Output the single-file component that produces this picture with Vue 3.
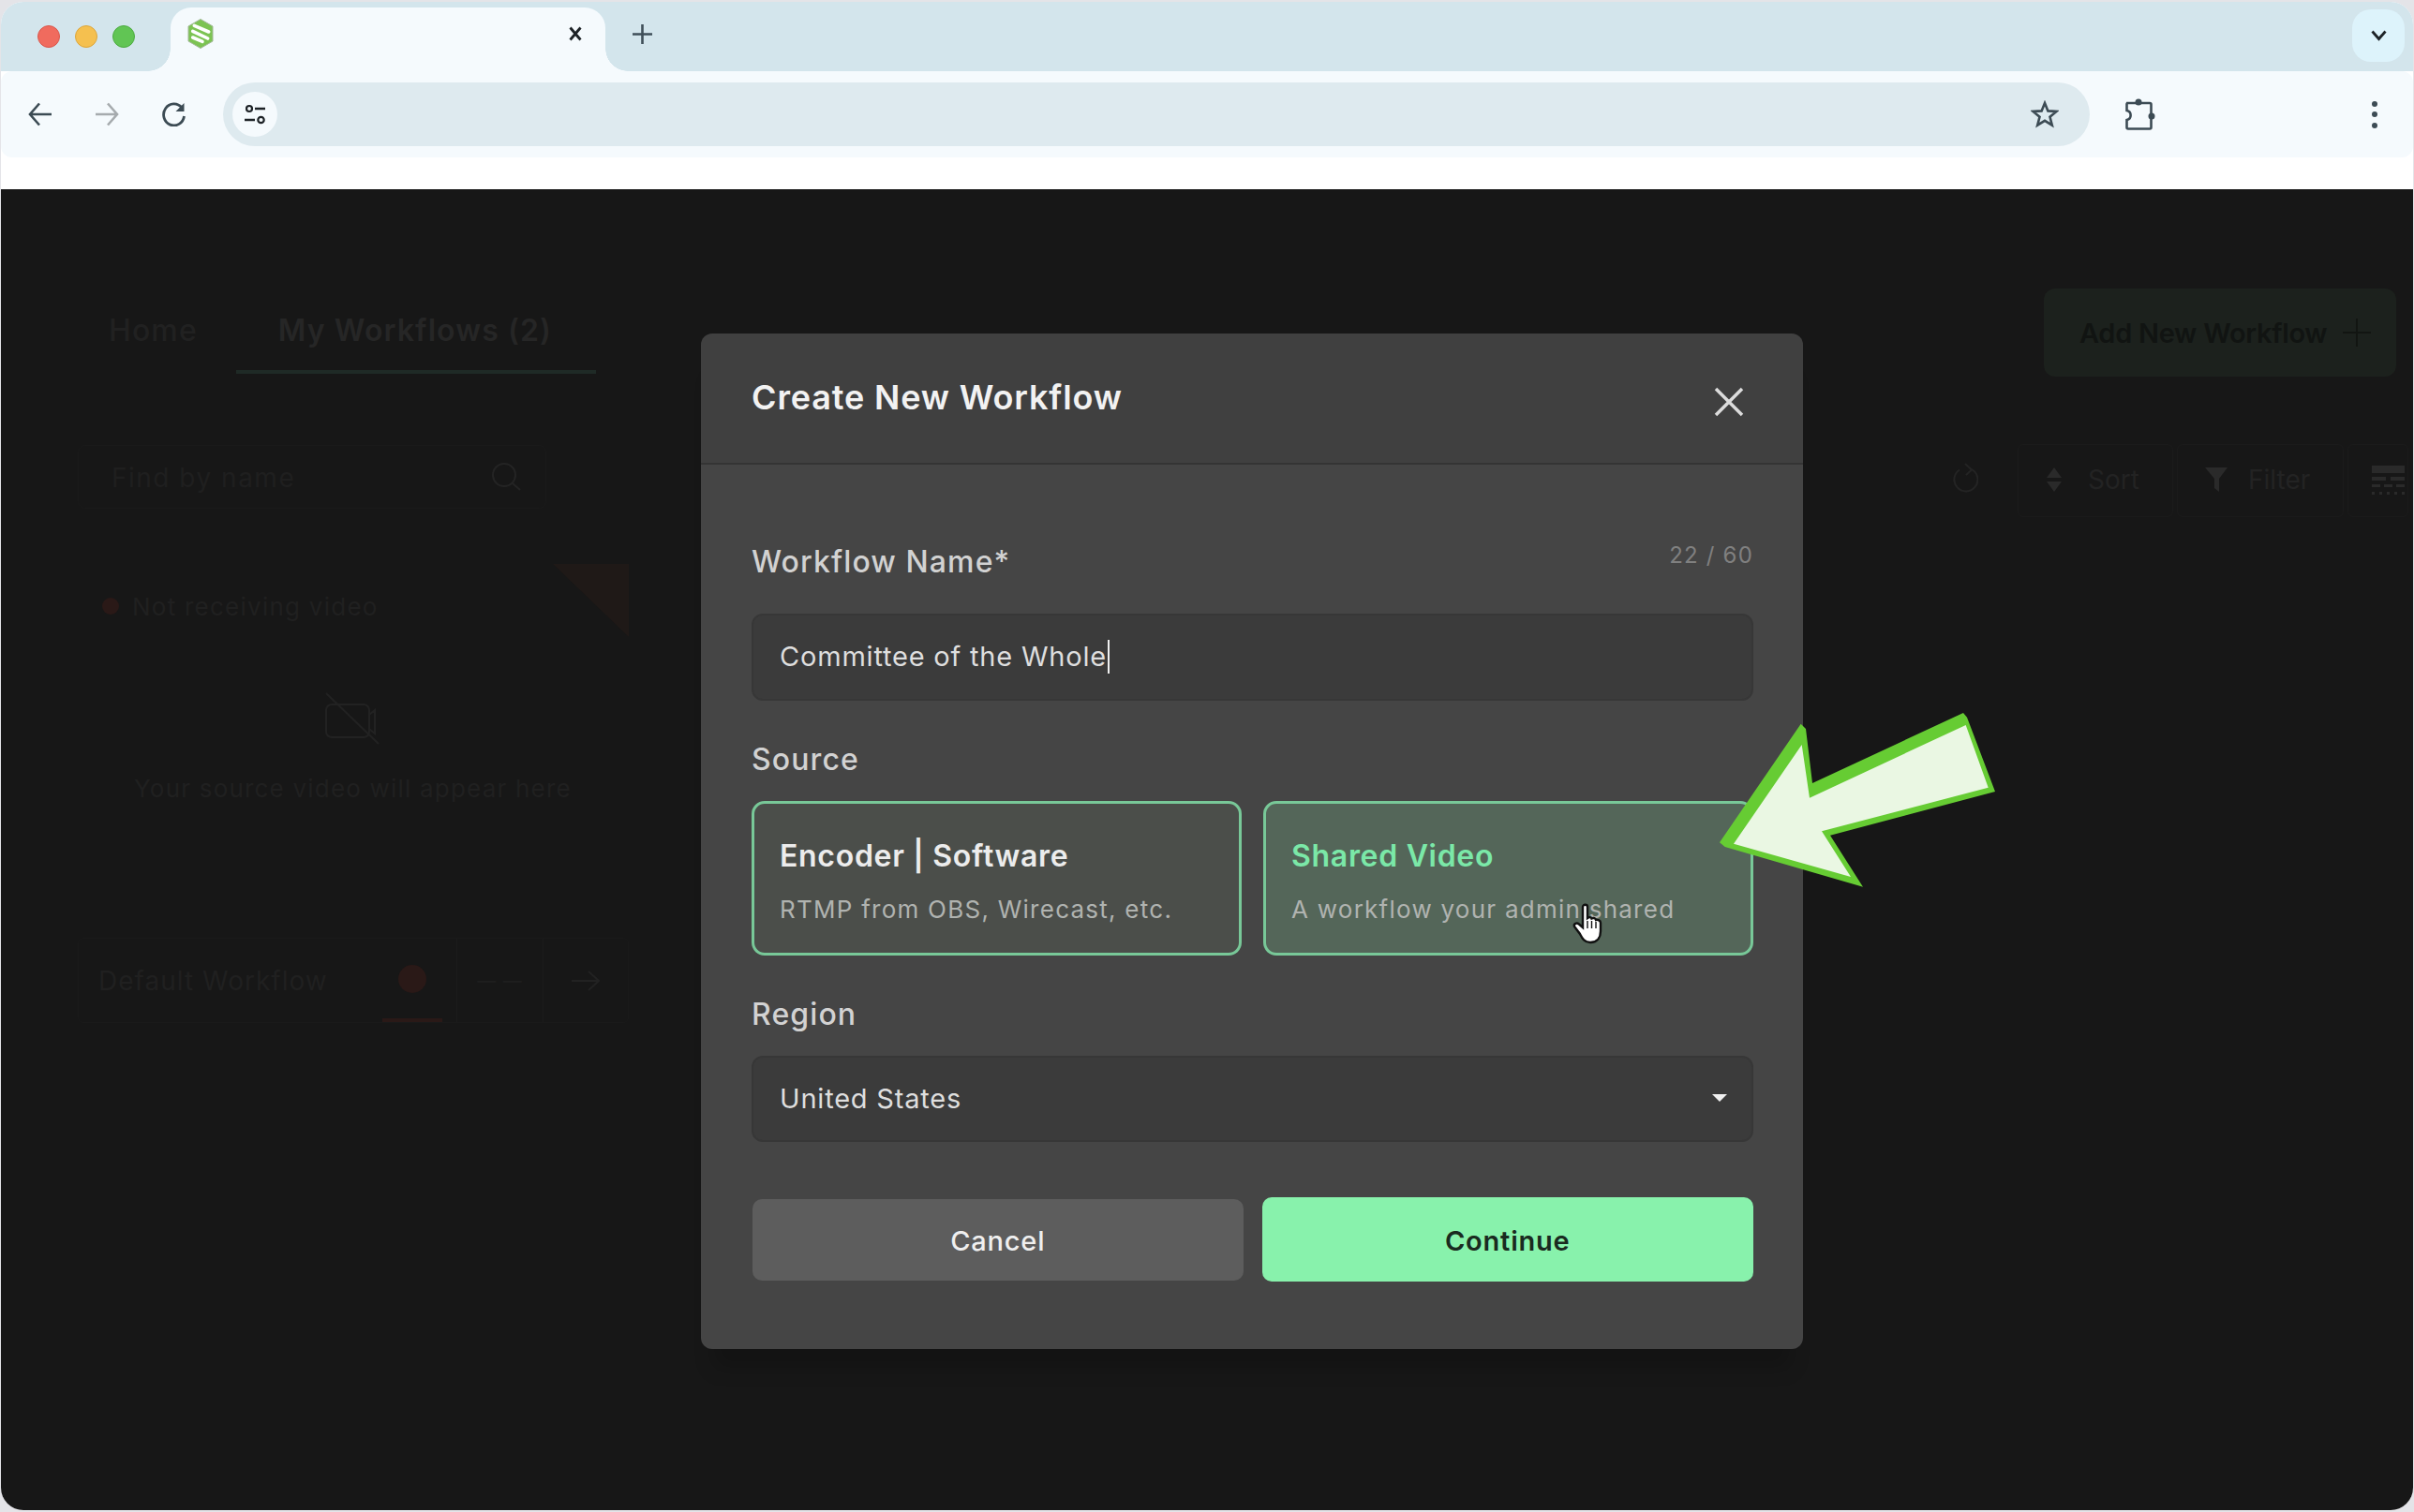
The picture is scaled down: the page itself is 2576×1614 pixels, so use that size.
<script setup>
const sourceOptions = [
  { title: 'Encoder | Software', desc: 'RTMP from OBS, Wirecast, etc.', shared: false },
  { title: 'Shared Video', desc: 'A workflow your admin shared', shared: true },
]
</script>

<template>
  <div class="window">
    <div class="tabstrip">
      <div class="lights">
        <span class="light red"></span>
        <span class="light yellow"></span>
        <span class="light green"></span>
      </div>
      <div class="tab">
        <svg class="favicon" width="28" height="32" viewBox="0 0 28 32">
          <path d="M14 0.500 L27 8 V24 L14 31.500 L1 24 V8 Z" fill="#7cc353" stroke="#a3b89a" stroke-width="1" />
          <path d="M7.300 7.300 L22.700 14 M5.700 13.300 L21.700 21 M5.700 20 L16 24.300" stroke="#fff" stroke-width="3.600" stroke-linecap="round" />
        </svg>
        <svg class="tab-close" width="16" height="16" viewBox="0 0 16 16">
          <path d="M2.500 1.500 L13.500 14.500 M13.500 1.500 L2.500 14.500" stroke="#1d2226" stroke-width="2.800" />
        </svg>
      </div>
      <svg class="new-tab" width="21" height="21" viewBox="0 0 21 21">
        <path d="M10.500 0 V21 M0 10.500 H21" stroke="#3f4f59" stroke-width="2.600" />
      </svg>
      <div class="tab-search">
        <svg width="17" height="12" viewBox="0 0 17 12">
          <path d="M1.500 1.500 L8.500 9.500 L15.500 1.500" fill="none" stroke="#1d2226" stroke-width="2.800" />
        </svg>
      </div>
    </div>

    <div class="toolbar">
      <svg class="nav-icon" width="26" height="26" viewBox="0 0 26 26">
        <path d="M25 13 H2 M12 1.500 L2 13 L12 24.500" fill="none" stroke="#3c4b54" stroke-width="2.600" />
      </svg>
      <svg class="nav-icon forward" width="26" height="26" viewBox="0 0 26 26">
        <path d="M1 13 H24 M14 1.500 L24 13 L14 24.500" fill="none" stroke="#a6abae" stroke-width="2.600" />
      </svg>
      <svg class="nav-icon reload" width="26" height="26" viewBox="0 0 26 26">
        <path d="M21 6 A11 11.500 0 1 0 23.500 15" fill="none" stroke="#3c4b54" stroke-width="2.800" />
        <path d="M23.500 1 V10 H14.500 Z" fill="#3c4b54" />
      </svg>
      <div class="omnibox">
        <div class="site-info">
          <svg width="24" height="24" viewBox="0 0 24 24">
            <circle cx="6" cy="6" r="3" fill="none" stroke="#1d2226" stroke-width="2.200" />
            <path d="M12 6 H23 M1 18 H12" stroke="#1d2226" stroke-width="2.400" />
            <circle cx="18.500" cy="18" r="3.200" fill="none" stroke="#1d2226" stroke-width="2.200" />
          </svg>
        </div>
        <svg class="star" width="30" height="30" viewBox="0 0 30 30">
          <path d="M15 3 L18.400 11.400 L27.500 12 L20.500 17.800 L22.800 26.600 L15 21.800 L7.200 26.600 L9.500 17.800 L2.500 12 L11.600 11.400 Z" fill="none" stroke="#3c4b54" stroke-width="2.600" />
        </svg>
      </div>
      <svg class="puzzle" width="32" height="34" viewBox="0 0 32 34">
        <path d="M2 5 H26 A1.500 1.500 0 0 1 27.500 6.500 V31 A1.500 1.500 0 0 1 26 32.500 H3 A1.500 1.500 0 0 1 1.500 31 V23 C7 22 7 14 1.500 13 V6 Z" fill="none" stroke="#3c4b54" stroke-width="2.600" />
        <circle cx="14" cy="4" r="3.500" fill="#3c4b54" />
        <circle cx="28" cy="19" r="3.500" fill="#3c4b54" />
      </svg>
      <div class="kebab"><span></span><span></span><span></span></div>
    </div>

    <div class="gap"></div>

    <div class="page">
      <div class="page-top">
        <div class="tabs">
          <span class="page-tab">Home</span>
          <span class="page-tab active">My Workflows (2)</span>
        </div>
        <div class="add-btn">
          Add New Workflow
          <svg width="30" height="30" viewBox="0 0 30 30"><path d="M15 0 V30 M0 15 H30" stroke="#121512" stroke-width="2" /></svg>
        </div>
      </div>

      <div class="filter-row">
        <div class="search">
          <span>Find by name</span>
          <svg width="32" height="32" viewBox="0 0 32 32">
            <circle cx="14" cy="14" r="12" fill="none" stroke="#242424" stroke-width="2" />
            <path d="M23 23 L31 30" stroke="#242424" stroke-width="2" />
          </svg>
        </div>
        <div class="filter-tools">
          <svg class="refresh" width="28" height="32" viewBox="0 0 28 32">
            <path d="M21 7 A12.500 12.500 0 1 1 8 7.500" fill="none" stroke="#242424" stroke-width="2" />
            <path d="M14 1 L21 7.500 L15 13" fill="none" stroke="#242424" stroke-width="2" />
          </svg>
          <div class="tool sort-tool">
            <svg width="18" height="26" viewBox="0 0 18 26"><path d="M9 0 L17 11 H1 Z M9 26 L17 15 H1 Z" fill="#2a2a2a" /></svg>
            <span>Sort</span>
          </div>
          <div class="tool filter-tool">
            <svg width="24" height="26" viewBox="0 0 24 26"><path d="M0 0 H24 L15 12 V26 L10 22 V12 Z" fill="#2a2a2a" /></svg>
            <span>Filter</span>
          </div>
          <div class="tool table-tool">
            <svg width="35" height="32" viewBox="0 0 35 32" fill="#2a2a2a">
              <rect width="35" height="8" />
              <rect y="12" width="15" height="4" /><rect x="20" y="12" width="15" height="4" />
              <rect y="20" width="9" height="3" /><rect x="13" y="20" width="9" height="3" /><rect x="26" y="20" width="9" height="3" />
              <rect y="28" width="3" height="3" /><rect x="8" y="28" width="3" height="3" /><rect x="16" y="28" width="3" height="3" /><rect x="24" y="28" width="3" height="3" /><rect x="32" y="28" width="3" height="3" />
            </svg>
          </div>
        </div>
      </div>

      <div class="preview">
        <div class="status"><span class="status-dot"></span>Not receiving video</div>
        <div class="corner"></div>
        <svg class="video-off" width="60" height="56" viewBox="0 0 60 56">
          <path d="M8 13 H42 A6 6 0 0 1 48 19 V42 A6 6 0 0 1 42 48 H8 A6 6 0 0 1 2 42 V19 A6 6 0 0 1 8 13 Z M48 24 L54 19 V44 L48 39 M2 1 L58 55" fill="none" stroke="#222" stroke-width="2" />
        </svg>
        <div class="preview-text">Your source video will appear here</div>
      </div>

      <div class="workflow-row">
        <span class="workflow-name">Default Workflow</span>
        <span class="workflow-state"><i></i></span>
        <span class="workflow-dash">— —</span>
        <span class="workflow-go">
          <svg width="30" height="22" viewBox="0 0 30 22"><path d="M0 11 H28 M18 1 L29 11 L18 21" fill="none" stroke="#222" stroke-width="2" /></svg>
        </span>
      </div>

      <div class="modal">
        <div class="modal-head">
          <h2>Create New Workflow</h2>
          <svg width="32" height="32" viewBox="0 0 32 32">
            <path d="M2 2 L30 30 M30 2 L2 30" stroke="#dcdcdc" stroke-width="3.500" />
          </svg>
        </div>
        <div class="modal-body">
          <div class="label-row">
            <label>Workflow Name*</label>
            <span class="counter">22 / 60</span>
          </div>
          <div class="field name-field">Committee of the Whole<span class="caret"></span></div>

          <label class="source-label">Source</label>
          <div class="cards">
            <div v-for="opt in sourceOptions" :key="opt.title" class="card" :class="{ shared: opt.shared }">
              <div class="card-title">{{ opt.title }}</div>
              <div class="card-desc">{{ opt.desc }}</div>
            </div>
          </div>

          <label class="region-label">Region</label>
          <div class="field select">
            United States
            <svg width="16" height="8" viewBox="0 0 16 8"><path d="M0 0 H16 L8 8 Z" fill="#f0f0f0" /></svg>
          </div>

          <div class="actions">
            <button class="btn cancel">Cancel</button>
            <button class="btn continue">Continue</button>
          </div>
        </div>
      </div>

      <svg class="cursor" width="34" height="44" viewBox="0 0 34 44">
        <path d="M12 4 C12 1 17 1 17 4 V16 C19 14.500 21 15 21.500 16.500 C23.500 15.500 25.500 16 26 18 C28 17.500 31 18.500 31 21 V30 C31 36 28 42 20 42 C14 42 11.500 38 9 33 L3 25 C2 22 5.500 20.500 8 22.500 L12 26 Z" fill="#fff" stroke="#111" stroke-width="2.400" />
        <path d="M17 19 V27 M21.500 19 V27 M26 20 V27" stroke="#111" stroke-width="1.400" />
      </svg>

      <svg class="arrow" width="300" height="192" viewBox="0 0 300 192">
        <path d="M5 144.300 L10.700 149 L158 191.700 L123 136.700 L299 90 L269 10.700 L265 6 L104 81 L97 23 L91.700 17.700 Z" fill="#66cc33" />
        <path d="M20 145.700 L145 181 L114 132.300 L291.700 85.700 L267.700 19 L101 96.700 L92.700 40 Z" fill="#eaf7e3" />
      </svg>
    </div>
  </div>
</template>

<style>
html, body {
  margin: 0;
  background: #e4e4e8;
}
</style>

<style scoped>
.window {
  width: 2574px;
  height: 1610px;
  margin-top: 2px;
  margin-left: 1px;
  display: flex;
  flex-direction: column;
  font-family: Inter, "Liberation Sans", sans-serif;
  border-radius: 24px;
  overflow: hidden;
  background: #fff;
}

.tabstrip {
  height: 74px;
  flex: none;
  background: #d3e5ec;
  display: flex;
  align-items: flex-end;
}

.lights {
  display: flex;
  gap: 16px;
  align-self: center;
  margin: 0 38px 0 39px;
}
.light {
  width: 24px;
  height: 24px;
  border-radius: 50%;
  box-sizing: border-box;
}
.red { background: #f06b5e; border: 1px solid #d9574c; }
.yellow { background: #f5c04f; border: 1px solid #dca63c; }
.green { background: #61c554; border: 1px solid #4cab41; }

.tab {
  width: 464px;
  height: 68px;
  background: #f5fafd;
  border-radius: 22px 22px 0 0;
  display: flex;
  align-items: center;
  justify-content: space-between;
  padding: 0 24px 12px 18px;
  box-sizing: border-box;
  position: relative;
}
.tab::before,
.tab::after {
  content: "";
  position: absolute;
  bottom: 0;
  width: 24px;
  height: 24px;
}
.tab::before {
  left: -24px;
  background: radial-gradient(circle at 0 0, transparent 23.500px, #f5fafd 24px);
}
.tab::after {
  right: -24px;
  background: radial-gradient(circle at 100% 0, transparent 23.500px, #f5fafd 24px);
}

.new-tab {
  align-self: center;
  margin-left: 29px;
  margin-top: -6px;
}

.tab-search {
  margin-left: auto;
  margin-right: 9px;
  margin-bottom: 10px;
  width: 56px;
  height: 56px;
  border-radius: 20px;
  background: #ddf3fb;
  display: flex;
  align-items: center;
  justify-content: center;
}

.toolbar {
  height: 92px;
  flex: none;
  background: #f5fafd;
  display: flex;
  align-items: center;
  border-radius: 12px;
  box-sizing: border-box;
  padding-left: 29px;
  position: relative;
}
.nav-icon { flex: none; }
.forward { margin-left: 45px; }
.reload { margin-left: 46px; }

.omnibox {
  margin-left: 39px;
  width: 1992px;
  height: 68px;
  background: #deeaef;
  border-radius: 34px;
  display: flex;
  align-items: center;
  justify-content: space-between;
  padding: 0 33px 0 10px;
  box-sizing: border-box;
}
.site-info {
  width: 48px;
  height: 48px;
  border-radius: 50%;
  background: #f5fafd;
  display: flex;
  align-items: center;
  justify-content: center;
}

.puzzle { margin-left: 38px; }

.kebab {
  margin-left: 231px;
  display: flex;
  flex-direction: column;
  gap: 5.500px;
}
.kebab span {
  width: 6px;
  height: 6px;
  border-radius: 50%;
  background: #3c4b54;
}

.gap {
  height: 34px;
  flex: none;
}

.page {
  flex: 1;
  background: #171717;
  position: relative;
  overflow: hidden;
  padding: 0 18px 0 82px;
  color: #232323;
}

.page-top {
  display: flex;
  align-items: flex-start;
  justify-content: space-between;
  padding-top: 106px;
  height: 200px;
  box-sizing: border-box;
}
.tabs {
  display: flex;
  font-size: 32px;
  letter-spacing: 1.100px;
}
.page-tab {
  padding: 25px 41px 23px 33px;
  font-weight: 500;
  color: #212121;
}
.page-tab.active {
  font-weight: 600;
  color: #262626;
  padding-left: 45px;
  padding-right: 47px;
  border-bottom: 4px solid #1f2a26;
}
.add-btn {
  width: 376px;
  height: 94px;
  box-sizing: border-box;
  background: #1c211d;
  border-radius: 12px;
  color: #111412;
  font-size: 29px;
  font-weight: 600;
  letter-spacing: -0.300px;
  display: flex;
  align-items: center;
  justify-content: space-between;
  padding: 0 27px 0 38px;
}

.filter-row {
  display: flex;
  justify-content: space-between;
  align-items: flex-start;
  margin-top: 72px;
  margin-right: -13px;
}
.search {
  width: 500px;
  height: 68px;
  margin-top: 1px;
  box-sizing: border-box;
  border: 1px solid #1a1a1a;
  border-radius: 8px;
  display: flex;
  align-items: center;
  justify-content: space-between;
  padding: 2px 26px 0 35px;
  font-size: 28px;
  letter-spacing: 1.500px;
  color: #1f1f1f;
}
.search svg { margin-top: -2px; }
.filter-tools {
  display: flex;
  align-items: center;
  height: 78px;
  gap: 4px;
  font-size: 28px;
}
.refresh { margin: -6px 38px 0 0; }
.tool {
  height: 78px;
  box-sizing: border-box;
  border: 1px solid #1b1b1b;
  border-radius: 6px;
  display: flex;
  align-items: center;
  gap: 27px;
  padding-bottom: 2px;
}
.sort-tool { width: 166px; padding-left: 29px; }
.filter-tool { width: 178px; padding-left: 29px; gap: 22px; }
.table-tool { width: 65px; padding-left: 25px; padding-bottom: 0; }
.table-tool svg { flex: none; }

.preview {
  position: relative;
  width: 588px;
  height: 399px;
  margin-top: 50px;
  box-sizing: border-box;
  padding-top: 29px;
  font-size: 26px;
  letter-spacing: 1.250px;
  color: #202020;
}
.status {
  display: flex;
  align-items: center;
  gap: 14px;
  height: 32px;
  padding-left: 26px;
}
.status-dot {
  width: 18px;
  height: 18px;
  border-radius: 50%;
  background: #2a1917;
}
.corner {
  position: absolute;
  top: 0;
  right: 0;
  width: 81px;
  height: 78px;
  background: #1f1917;
  clip-path: polygon(0 0, 100% 0, 100% 100%);
}
.video-off {
  display: block;
  margin: 76px 0 0 263px;
}
.preview-text {
  margin: 31px 0 0 60px;
  line-height: 32px;
  white-space: nowrap;
  letter-spacing: 1.200px;
}

.workflow-row {
  width: 588px;
  height: 91px;
  box-sizing: border-box;
  border: 1px solid #1a1a1a;
  border-radius: 6px;
  display: flex;
  align-items: stretch;
  font-size: 28px;
  letter-spacing: 1px;
  color: #202020;
}
.workflow-name {
  width: 324px;
  padding-left: 21px;
  box-sizing: border-box;
  display: flex;
  align-items: center;
}
.workflow-state {
  width: 64px;
  display: flex;
  align-items: center;
  justify-content: center;
  border-bottom: 4px solid #2a1917;
  box-sizing: border-box;
}
.workflow-state i {
  width: 30px;
  height: 30px;
  border-radius: 50%;
  background: #2a1917;
}
.workflow-dash {
  width: 93px;
  margin-left: 15px;
  box-sizing: border-box;
  border-left: 1px solid #1b1b1b;
  border-right: 1px solid #1b1b1b;
  display: flex;
  align-items: center;
  justify-content: center;
  font-size: 20px;
  color: #1e1e1e;
}
.workflow-go {
  flex: 1;
  display: flex;
  align-items: center;
  justify-content: center;
}

.modal {
  position: absolute;
  left: 747px;
  top: 154px;
  width: 1176px;
  border-radius: 12px;
  overflow: hidden;
  color: #d6d6d6;
  box-shadow: 0 34px 20px -14px rgba(0, 0, 0, 0.18);
}
.modal-head {
  height: 138px;
  box-sizing: content-box;
  background: #404040;
  border-bottom: 2px solid #343434;
  display: flex;
  align-items: center;
  justify-content: space-between;
  padding: 0 63px 0 54px;
}
.modal-head h2 {
  margin: 0;
  padding-bottom: 3px;
  font-size: 36px;
  font-weight: 600;
  letter-spacing: 0.850px;
  color: #f2f2f2;
}
.modal-head svg { margin-top: 8px; }

.modal-body {
  background: #454545;
  padding: 84px 53px 71px 54px;
  font-size: 32px;
  letter-spacing: 1.100px;
}
.modal-body label {
  display: block;
  line-height: 40px;
  font-weight: 500;
  color: #d2d2d2;
}
.label-row {
  display: flex;
  justify-content: space-between;
  align-items: flex-start;
}
.counter {
  font-size: 24px;
  line-height: 26px;
  letter-spacing: 1.200px;
  color: #808080;
}

.field {
  margin-top: 35px;
  height: 93px;
  box-sizing: border-box;
  background: #3b3b3b;
  border: 2px solid #373737;
  border-radius: 12px;
  display: flex;
  align-items: center;
  padding: 0 24px 2px 28px;
  font-size: 29px;
  letter-spacing: 0.800px;
  color: #dedede;
}
.caret {
  display: inline-block;
  width: 2px;
  height: 36px;
  background: #f0f0f0;
  margin-left: 1px;
}

.modal-body .source-label { margin-top: 43px; }
.cards {
  display: grid;
  grid-template-columns: 1fr 1fr;
  gap: 23px;
  margin-top: 24px;
}
.card {
  height: 165px;
  box-sizing: border-box;
  background: #4b4e4a;
  border: 3px solid #78c898;
  border-radius: 14px;
  padding: 36px 0 0 27px;
}
.card.shared { background: #546659; }
.card-title {
  font-size: 32px;
  line-height: 40px;
  font-weight: 600;
  letter-spacing: 0.700px;
  color: #ececec;
}
.shared .card-title { color: #7be8a8; }
.card-desc {
  margin-top: 19px;
  font-size: 26px;
  line-height: 36px;
  letter-spacing: 1.250px;
  color: #b0b3b0;
}

.modal-body .region-label { margin-top: 43px; }
.select {
  margin-top: 24px;
  height: 92px;
  justify-content: space-between;
  padding-right: 26px;
}

.actions {
  display: grid;
  grid-template-columns: 1fr 1fr;
  gap: 20px;
  margin-top: 58px;
  height: 92px;
  align-items: center;
}
.btn {
  border: none;
  border-radius: 10px;
  font-family: inherit;
  font-size: 29px;
  letter-spacing: 0.800px;
  padding: 2px 0 0;
}
.cancel {
  height: 87px;
  margin-left: 1px;
  background: #5d5d5d;
  color: #efefef;
  font-weight: 500;
}
.continue {
  height: 90px;
  background: #88f2ac;
  color: #1a2a20;
  font-weight: 600;
}

.cursor {
  position: absolute;
  left: 1676px;
  top: 762px;
}
.arrow {
  position: absolute;
  left: 1829px;
  top: 553px;
}
</style>
